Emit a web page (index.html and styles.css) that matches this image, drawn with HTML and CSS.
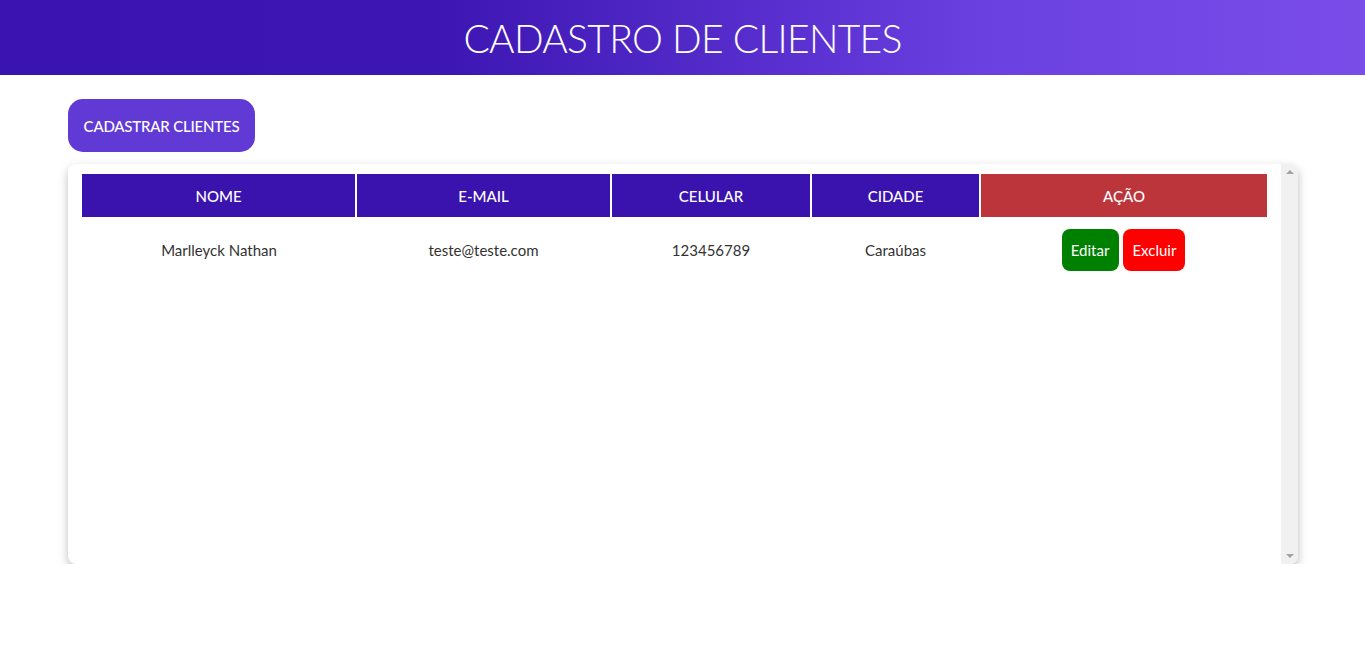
FILE: index.html
```html
<!DOCTYPE html>
<html lang="pt-BR">
<head>
<meta charset="utf-8">
<title>Cadastro de Clientes</title>
<link rel="stylesheet" href="styles.css">
</head>
<body>
<header class="topbar">
  <h1 class="title">CADASTRO DE CLIENTES</h1>
</header>
<main class="content">
  <button class="btn-new">CADASTRAR CLIENTES</button>
  <div class="card">
    <div class="card-body">
      <table class="clients">
        <colgroup>
          <col class="c-nome"><col class="c-email"><col class="c-cel"><col class="c-cidade"><col class="c-acao">
        </colgroup>
        <thead>
          <tr>
            <th>NOME</th>
            <th>E-MAIL</th>
            <th>CELULAR</th>
            <th>CIDADE</th>
            <th class="th-acao">AÇÃO</th>
          </tr>
        </thead>
        <tbody>
          <tr>
            <td>Marlleyck Nathan</td>
            <td>teste@teste.com</td>
            <td>123456789</td>
            <td>Caraúbas</td>
            <td class="actions">
              <button class="btn-edit">Editar</button>
              <button class="btn-del">Excluir</button>
            </td>
          </tr>
        </tbody>
      </table>
    </div>
    <div class="scrollbar" aria-hidden="true">
      <span class="arrow arrow-up"></span>
      <span class="arrow arrow-down"></span>
    </div>
  </div>
</main>
</body>
</html>
```
FILE: styles.css
```css
* { box-sizing: border-box; }
body {
  margin: 0;
  font-family: "Lato", "Noto Sans", sans-serif;
  background: #fff;
  color: #333;
}
.topbar {
  height: 75px;
  background: linear-gradient(90deg, #3a13b0 0%, #3c15b2 32%, #6a40e0 72%, #7a4de9 100%);
  display: flex;
  align-items: center;
  justify-content: center;
}
.title {
  margin: 0;
  color: #fff;
  font-family: "Lato", sans-serif;
  font-weight: 300;
  font-size: 39px;
  letter-spacing: -0.7px;
}
.content {
  padding: 24px 67px 0 68px;
}
.btn-new {
  display: block;
  width: 187px;
  height: 53px;
  border: none;
  border-radius: 15px;
  background: #6139d4;
  color: #fff;
  font-family: "Lato", sans-serif;
  font-size: 15px;
  font-weight: 500;
  letter-spacing: -0.2px;
  margin-bottom: 12px;
  padding: 0;
}
.card {
  display: flex;
  height: 400px;
  background: #fff;
  border-radius: 8px;
  box-shadow: 0 4px 10px rgba(0, 0, 0, 0.26);
  overflow: hidden;
}
.card-body {
  flex: 1;
  min-width: 0;
  padding: 10px 14px 0 14px;
}
.scrollbar {
  width: 17px;
  flex: none;
  background: #f1f1f1;
  display: flex;
  flex-direction: column;
  justify-content: space-between;
  align-items: center;
  padding: 6px 0 6px 0;
}
.arrow {
  width: 0;
  height: 0;
  border-left: 4px solid transparent;
  border-right: 4px solid transparent;
}
.arrow-up { border-bottom: 4px solid #a3a3a3; }
.arrow-down { border-top: 4px solid #a3a3a3; }
.clients {
  width: 100%;
  border-collapse: collapse;
  table-layout: fixed;
}
.c-nome { width: 274px; }
.c-email { width: 255px; }
.c-cel { width: 200px; }
.c-cidade { width: 169px; }
.c-acao { width: 287px; }
.clients th {
  height: 43px;
  background: #3a13ae;
  color: #fff;
  font-weight: 500;
  font-size: 15px;
  border-left: 2px solid #fff;
  padding: 0;
}
.clients th:first-child { border-left: none; }
.clients .th-acao { background: #bb353b; }
.clients td {
  text-align: center;
  font-size: 15px;
  color: #333;
  padding: 12px 0;
  height: 66px;
}
.actions { white-space: nowrap; }
.btn-edit, .btn-del {
  height: 42px;
  border: none;
  border-radius: 8px;
  color: #fff;
  font-family: "Lato", sans-serif;
  font-size: 15px;
  padding: 0;
  vertical-align: middle;
}
.btn-edit { background: #008000; width: 57px; }
.btn-del { background: #ff0000; width: 62px; margin-left: 1px; }
```
